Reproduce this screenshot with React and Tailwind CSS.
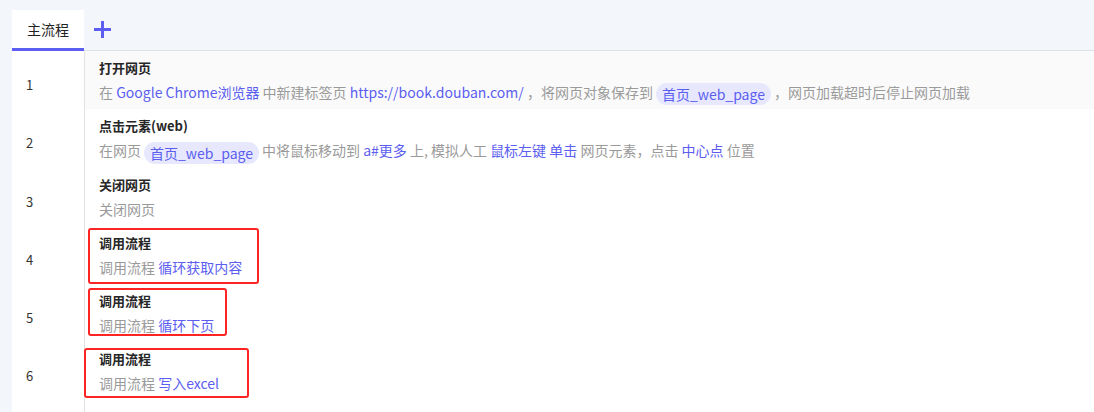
import React from "react";

const B = ({ children }) => <span className="text-[#5b5ef0]">{children}</span>;
const G = ({ children }) => <span className="text-[#9a9a9a]">{children}</span>;
const Pill = ({ children }) => (
  <span className="inline-block align-middle h-[22px] leading-[22px] px-[6px] mx-[3px] rounded-full bg-[#e7e8fd] text-[#5b5ef0]">
    {children}
  </span>
);

const rows = [
  {
    title: "打开网页",
    active: true,
    desc: (
      <>
        <G>在 </G>
        <B>Google Chrome浏览器</B> <G>中新建标签页</G> <B>https://book.douban.com/</B>{" "}
        <G>，将网页对象保存到</G>
        <Pill>首页_web_page</Pill>
        <G>，网页加载超时后停止网页加载</G>
      </>
    ),
  },
  {
    title: "点击元素(web)",
    desc: (
      <>
        <G>在网页</G>
        <Pill>首页_web_page</Pill>
        <G>中将鼠标移动到</G> <B>a#更多</B> <G>上, 模拟人工</G> <B>鼠标左键</B> <B>单击</B>{" "}
        <G>网页元素，点击</G> <B>中心点</B> <G>位置</G>
      </>
    ),
  },
  { title: "关闭网页", desc: <G>关闭网页</G> },
  {
    title: "调用流程",
    desc: (
      <>
        <G>调用流程</G> <B>循环获取内容</B>
      </>
    ),
  },
  {
    title: "调用流程",
    desc: (
      <>
        <G>调用流程</G> <B>循环下页</B>
      </>
    ),
  },
  {
    title: "调用流程",
    desc: (
      <>
        <G>调用流程</G> <B>写入excel</B>
      </>
    ),
  },
  {
    title: "调用流程",
    desc: (
      <>
        <G>调用流程</G> <B>...</B>
      </>
    ),
  },
];

export default function App() {
  return (
    <div
      className="relative w-[1094px] h-[412px] overflow-hidden bg-[#f3f6fa]"
      style={{ fontFamily: '"Noto Sans CJK SC", "Noto Sans", sans-serif' }}
    >
      <div className="flex items-end h-[51px] pl-3">
        <div className="w-[72px] h-[41px] bg-white flex items-center justify-center border-b-[3px] border-[#5b5ef0] text-[14px] text-[#222]">
          主流程
        </div>
        <div className="flex-1 h-[51px] flex items-start border-b border-[#dde1e6] pl-[9px] pt-[20px]">
          <svg width="19" height="19" viewBox="0 0 19 19">
            <path d="M9.5 1v17M1 9.5h17" stroke="#5b5ef0" strokeWidth="3" />
          </svg>
        </div>
      </div>
      <div className="ml-3 bg-white flex flex-col">
        {rows.map((r, i) => (
          <div key={i} className="flex h-[58.3px] shrink-0">
            <div className="w-[73px] shrink-0 border-r border-[#e3e3e3] pl-[14px] pt-[25px] text-[13px] leading-[18px] text-[#333]">
              {i + 1}
            </div>
            <div className={`flex-1 pl-[14px] pt-[8px] ${r.active ? "bg-[#fafafa]" : ""}`}>
              <div className="text-[13px] leading-[18px] font-bold text-[#262626]">{r.title}</div>
              <div className="mt-[4px] text-[14px] leading-[22px] whitespace-pre">{r.desc}</div>
            </div>
          </div>
        ))}
      </div>
      <div className="absolute left-[88px] top-[228px] w-[171px] h-[56px] border-2 border-[#ff2424] rounded-[3px]" />
      <div className="absolute left-[88px] top-[288px] w-[139px] h-[48px] border-2 border-[#ff2424] rounded-[3px]" />
      <div className="absolute left-[84px] top-[348px] w-[165px] h-[50px] border-2 border-[#ff2424] rounded-[3px]" />
    </div>
  );
}
